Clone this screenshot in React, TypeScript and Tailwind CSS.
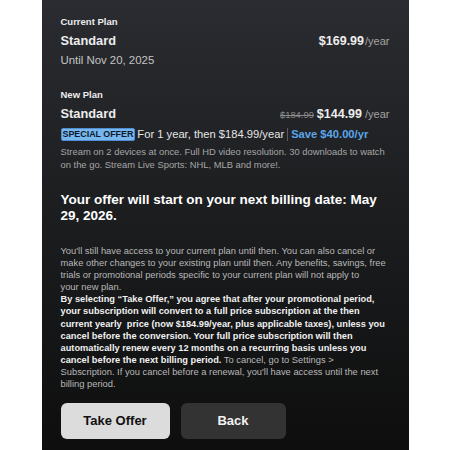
const FONT = { fontFamily: '"Liberation Sans", Arial, sans-serif' };

export default function App() {
  return (
    <div className="flex h-[450px] w-full justify-center overflow-hidden bg-white" style={FONT}>
      <div className="flex h-[450px] w-[367px] flex-col bg-[linear-gradient(180deg,#2b2c31_0%,#1c1e20_45%,#0e0e0e_100%)] px-[19px] pt-[15px] text-[#ededed]">
        {/* current plan */}
        <div className="text-[9.5px] font-bold leading-[14px]">Current Plan</div>
        <div className="mt-[3px] flex items-baseline justify-between leading-[18px]">
          <span className="text-[12.8px] font-bold">Standard</span>
          <span className="flex items-baseline">
            <span className="text-[12.5px] font-bold">$169.99</span>
            <span className="ml-[1px] text-[11px] text-[#a3a3a3]">/year</span>
          </span>
        </div>
        <div className="mt-[2px] text-[11.4px] leading-[16px] text-[#c4c4c4]">Until Nov 20, 2025</div>

        {/* new plan */}
        <div className="mt-[20px] text-[9.5px] font-bold leading-[14px]">New Plan</div>
        <div className="mt-[3px] flex items-baseline justify-between leading-[18px]">
          <span className="text-[12.8px] font-bold">Standard</span>
          <span className="flex items-baseline">
            <span className="text-[9.4px] text-[#8c8c8c] line-through">$184.99</span>
            <span className="ml-[3px] text-[12.5px] font-bold">$144.99</span>
            <span className="ml-[3px] text-[11px] text-[#a3a3a3]">/year</span>
          </span>
        </div>
        <div className="mt-[2px] flex items-center leading-[16px]">
          <span className="rounded-[2px] border border-[#4f8fd0] bg-[#78b6f0] px-[1px] text-[8.9px] font-bold leading-[11px] text-[#0c1a2c]">
            SPECIAL OFFER
          </span>
          <span className="ml-[2px] text-[11.2px] text-[#e6e6e6]">For 1 year, then $184.99/year</span>
          <span className="mx-[3px] h-[13px] w-px bg-[#5a5a5a]" />
          <span className="text-[11.2px] font-bold text-[#5ba6ea]">Save $40.00/yr</span>
        </div>
        <p className="mt-[3px] text-[9.4px] leading-[13px] text-[#a6a6a6]">
          Stream on 2 devices at once. Full HD video resolution. 30 downloads to watch on the go. Stream Live Sports: NHL, MLB and more!.
        </p>

        {/* offer start */}
        <h2 className="mt-[21px] text-[13.5px] font-bold leading-[16px] text-white">
          Your offer will start on your next billing date: May 29, 2026.
        </h2>

        <div className="mt-[21px] text-[9.35px] leading-[12.1px] text-[#b8b8b8]">
          <p>
            You'll still have access to your current plan until then. You can also cancel or make other changes to your existing plan until then. Any benefits, savings, free trials or promotional periods specific to your current plan will not apply to
            <br />
            your new plan.
          </p>
          <p>
            <span className="text-[9.25px] font-bold text-[#f0f0f0]">
              By selecting “Take Offer,” you agree that after your promotional period, your subscription will convert to a full price subscription at the then current yearly&nbsp; price (now $184.99/year, plus applicable taxes), unless you cancel before the conversion. Your full price subscription will then automatically renew every 12 months on a recurring basis unless you cancel before the next billing period.
            </span>{" "}
            To cancel, go to Settings &gt; Subscription. If you cancel before a renewal, you'll have access until the next billing period.
          </p>
        </div>

        <div className="mt-[13px] flex gap-[11px]">
          <button
            type="button"
            className="h-[36px] w-[109px] rounded-[6px] bg-[#dcdcdc] text-[13px] font-bold text-[#111]"
          >
            Take Offer
          </button>
          <button
            type="button"
            className="h-[36px] w-[105px] rounded-[6px] bg-[#333333] text-[13px] font-bold text-[#f2f2f2]"
          >
            Back
          </button>
        </div>
      </div>
    </div>
  );
}
